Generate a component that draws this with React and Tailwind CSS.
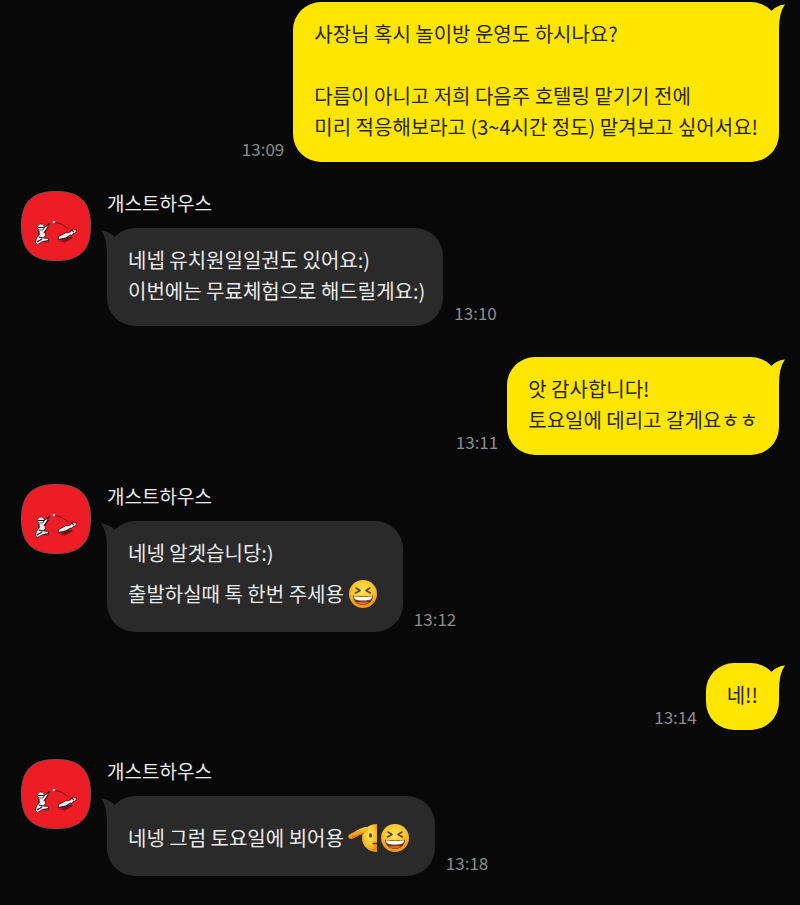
const messages = [
  {
    id: 1,
    mine: true,
    time: '13:09',
    lines: [
      '사장님 혹시 놀이방 운영도 하시나요?',
      '',
      '다름이 아니고 저희 다음주 호텔링 맡기기 전에',
      '미리 적응해보라고 (3~4시간 정도) 맡겨보고 싶어서요!',
    ],
  },
  {
    id: 2,
    time: '13:10',
    lines: ['네넵 유치원일일권도 있어요:)', '이번에는 무료체험으로 해드릴게요:)'],
  },
  {
    id: 3,
    mine: true,
    time: '13:11',
    lines: ['앗 감사합니다!', '토요일에 데리고 갈게요ㅎㅎ'],
  },
  {
    id: 4,
    time: '13:12',
    lines: ['네넹 알겟습니당:)', '출발하실때 톡 한번 주세용'],
    emojis: ['laugh'],
  },
  { id: 5, mine: true, time: '13:14', lines: ['네!!'] },
  {
    id: 6,
    time: '13:18',
    lines: ['네넹 그럼 토요일에 뵈어용'],
    emojis: ['salute', 'laugh'],
  },
];

function EmojiGradients() {
  return (
    <svg className="absolute" width="0" height="0" aria-hidden="true">
      <defs>
        <radialGradient id="face" cx="50%" cy="38%" r="62%">
          <stop offset="0" stopColor="#ffe45c" />
          <stop offset="0.6" stopColor="#fdc52f" />
          <stop offset="1" stopColor="#ee8a14" />
        </radialGradient>
        <linearGradient id="hand" x1="0" y1="0" x2="0" y2="1">
          <stop offset="0" stopColor="#ffc93a" />
          <stop offset="1" stopColor="#e8860f" />
        </linearGradient>
      </defs>
    </svg>
  );
}

function LaughEmoji() {
  return (
    <svg width="30" height="30" viewBox="0 0 30 30" role="img" aria-label="웃는 얼굴">
      <circle cx="15" cy="15" r="14" fill="url(#face)" />
      <g fill="none" stroke="#6b3d0c" strokeWidth="1.5" strokeLinecap="round" strokeLinejoin="round">
        <path d="M8 9l4 2.500L7.500 14" />
        <path d="M22 9l-4 2.500 4.500 2.500" />
      </g>
      <path d="M5 16.500c3 1.200 17 1.200 20 0 .2 5-4 9.500-10 9.500S4.800 21.500 5 16.500z" fill="#6f3510" />
      <path d="M5.800 17.300c4 1 14.400 1 18.400 0-.4 3.200-1.800 4.200-9.200 4.200s-8.800-1-9.200-4.200z" fill="#fffdf5" />
      <path d="M9 23.800c3-1.300 9-1.300 12 0-1.600 1.200-3.700 1.700-6 1.700s-4.400-.5-6-1.700z" fill="#d9682a" />
    </svg>
  );
}

function SaluteEmoji() {
  return (
    <svg width="30" height="30" viewBox="0 0 30 30" role="img" aria-label="경례하는 얼굴">
      <path d="M29 1C20.500 1 14 7 14 15s6.500 14 15 14z" fill="url(#face)" />
      <path
        d="M1.500 11.500C7 8.500 13 4.500 18 4c2.500-.2 3.500 2.500 1.500 4L16 10.500C11 12 7 15 3.500 16 .5 16.500-1 13 1.500 11.500z"
        fill="url(#hand)"
      />
      <path d="M4 14.500c4-1 7.500-3.500 12-4.500" fill="none" stroke="#c96a0c" strokeWidth="1" />
      <ellipse cx="22.500" cy="12.500" rx="1.500" ry="2.200" fill="#6b3d0c" />
      <path d="M24.500 20.500H29" stroke="#6b3d0c" strokeWidth="1.600" />
    </svg>
  );
}

function Emoji({ name }) {
  return name === 'salute' ? <SaluteEmoji /> : <LaughEmoji />;
}

function Avatar() {
  return (
    <svg className="size-[70px] shrink-0" viewBox="0 0 70 70" role="img" aria-label="개스트하우스 프로필">
      <path
        d="M35 .5C59 .5 69.500 11 69.500 35S59 69.500 35 69.500.5 59 .5 35 11 .5 35 .5z"
        fill="#ee1c25"
        stroke="#8d4a4e"
      />
      {/* 공 던지는 사람 */}
      <path
        d="M17 39l5.500-1.500L26 34l2 1.500-4 5 .5 4L22.500 47l5 .5v3.500l-6-.5-1.500 1-3.500 2-2-1.500 1-5 2.500-3z"
        fill="#f8f0f0"
        stroke="#3a1013"
        strokeWidth=".8"
      />
      <path d="M16.500 37.500c-.5-3 1.500-4.500 3.500-4.500s3.500 1.500 3.300 3L22 39h-4z" fill="#f8f0f0" stroke="#3a1013" strokeWidth=".7" />
      <path
        d="M17 36.500h6.500M18 40v4M23 42l4-6M17.500 46l5 1M16 51l5-3M23 50.500l4-1"
        stroke="#241012"
        strokeWidth="1.200"
        fill="none"
      />
      <path d="M25.500 35.500l3-3" stroke="#241012" strokeWidth="1.600" />
      {/* 공과 줄 */}
      <circle cx="33" cy="31" r="1.300" fill="#ffd9d9" />
      <path d="M34 31.500c5 .5 9.500 3 13.500 6.500" fill="none" stroke="#5c0f14" strokeWidth=".9" />
      {/* 강아지 */}
      <path d="M39 50.500l5 1 8-4.500-3-2z" fill="#7d0f15" />
      <path
        d="M37.500 45.500l7-3.500 5-1 1.500-3 2 1 2.500-.5-.5 3-3.500 1.500-2 3-6 1.500-6 1.500z"
        fill="#f8f0f0"
        stroke="#3a1013"
        strokeWidth=".8"
      />
      <path d="M38 48.500l7-1.500 5-3M50.500 39l2.500 2" stroke="#241012" strokeWidth="1.100" fill="none" />
    </svg>
  );
}

function Bubble({ mine, lines, emojis = [] }) {
  return (
    <div
      className={`relative rounded-[28px] pt-4 pb-5 pl-[21px] text-[20px] leading-[31px] ${
        mine ? 'bg-[#ffe600] pr-[21px] text-[#29260a]' : 'bg-[#2a2a2a] pr-[18px] text-[#ececec]'
      }`}
    >
      <svg
        className={`absolute top-0 ${mine ? '-right-[7px] text-[#ffe600]' : '-left-[7px] -scale-x-100 text-[#2a2a2a]'}`}
        width="24"
        height="28"
        viewBox="0 0 24 28"
        aria-hidden="true"
      >
        <path d="M9.500 9Q15 3 23 2.500Q17 10 17 28L5 28L3 10z" fill="currentColor" />
      </svg>
      {lines.map((line, i) => {
        const withEmoji = emojis.length > 0 && i === lines.length - 1;
        return withEmoji ? (
          <div key={i} className="flex items-center gap-1 pt-2 pr-[7px] leading-9">
            <p>{line}</p>
            <span className="flex gap-[2px]">
              {emojis.map((name) => (
                <Emoji key={name} name={name} />
              ))}
            </span>
          </div>
        ) : (
          <p key={i} className="min-h-[31px]">
            {line}
          </p>
        );
      })}
    </div>
  );
}

function Time({ children }) {
  return <time className="shrink-0 pb-[3px] text-[17px] leading-5 text-[#8c8c8c]">{children}</time>;
}

function MyMessage({ message }) {
  return (
    <li className="flex items-end justify-end gap-[9px]">
      <Time>{message.time}</Time>
      <Bubble mine lines={message.lines} />
    </li>
  );
}

function TheirMessage({ message }) {
  return (
    <li className="flex items-start gap-4 pb-[2px]">
      <Avatar />
      <div>
        <p className="mb-[14px] text-[19px] leading-[23px] text-[#ececec]">개스트하우스</p>
        <div className="flex items-end gap-[11px]">
          <Bubble lines={message.lines} emojis={message.emojis} />
          <Time>{message.time}</Time>
        </div>
      </div>
    </li>
  );
}

export default function App() {
  return (
    <main className="min-h-screen bg-[#080808] px-[21px] pt-[2px] pb-6 font-['Noto_Sans_CJK_KR',sans-serif]">
      <EmojiGradients />
      <ul className="flex flex-col gap-[29px]">
        {messages.map((message) =>
          message.mine ? (
            <MyMessage key={message.id} message={message} />
          ) : (
            <TheirMessage key={message.id} message={message} />
          )
        )}
      </ul>
    </main>
  );
}
